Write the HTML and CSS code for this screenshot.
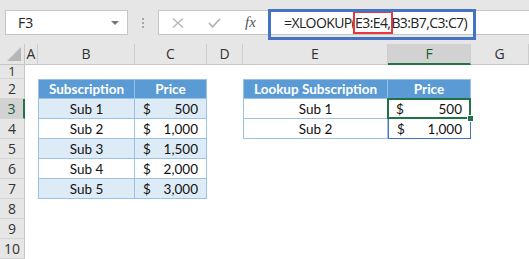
FILE: index.html
```html
<!DOCTYPE html>
<html lang="en">
<head>
    <meta charset="UTF-8">
    <title>XLOOKUP</title>
    <link rel="stylesheet" href="styles.css">
</head>
<body>
    <div class="bar">
        <div class="namebox">
            <span>F3</span>
            <span class="arrow"></span>
        </div>
        <div class="dots"><i></i><i></i><i></i></div>
        <div class="fxbox">
            <svg class="ico" width="12" height="10" viewBox="0 0 12 10"><path d="M1 0.5 L11 9.5 M11 0.5 L1 9.5" stroke="#b4b4b4" stroke-width="1.3" fill="none"/></svg>
            <svg class="ico" width="13" height="10" viewBox="0 0 13 10"><path d="M1 5 L4.5 8.8 L12 1" stroke="#b4b4b4" stroke-width="1.8" fill="none"/></svg>
            <span class="fx">fx</span>
        </div>
        <div class="formula">
            <span class="ftext">=XLOOKUP(<span class="ref">E3:E4,</span>B3:B7,C3:C7)</span>
            <div class="mark"></div>
        </div>
    </div>

    <div class="sheet">
        <!-- column headers -->
        <div class="corner"></div>
        <div class="ch">A</div>
        <div class="ch">B</div>
        <div class="ch">C</div>
        <div class="ch">D</div>
        <div class="ch">E</div>
        <div class="ch on">F</div>
        <div class="ch">G</div>

        <!-- row 1 -->
        <div class="rh short">1</div>
        <div></div><div></div><div></div><div></div><div></div><div></div><div></div>

        <!-- row 2 -->
        <div class="rh">2</div>
        <div></div>
        <div class="t th first top">Subscription</div>
        <div class="t th top">Price</div>
        <div></div>
        <div class="t th first top">Lookup Subscription</div>
        <div class="t th top">Price</div>
        <div></div>

        <!-- row 3 -->
        <div class="rh on">3</div>
        <div></div>
        <div class="t alt first">Sub 1</div>
        <div class="t alt amt"><span>$</span><span>500</span></div>
        <div></div>
        <div class="t first">Sub 1</div>
        <div class="t amt sel"><span>$</span><span>500</span></div>
        <div></div>

        <!-- row 4 -->
        <div class="rh">4</div>
        <div></div>
        <div class="t first">Sub 2</div>
        <div class="t amt"><span>$</span><span>1,000</span></div>
        <div></div>
        <div class="t first">Sub 2</div>
        <div class="t amt spill"><span>$</span><span>1,000</span></div>
        <div></div>

        <!-- row 5 -->
        <div class="rh">5</div>
        <div></div>
        <div class="t alt first">Sub 3</div>
        <div class="t alt amt"><span>$</span><span>1,500</span></div>
        <div></div><div></div><div></div><div></div>

        <!-- row 6 -->
        <div class="rh">6</div>
        <div></div>
        <div class="t first">Sub 4</div>
        <div class="t amt"><span>$</span><span>2,000</span></div>
        <div></div><div></div><div></div><div></div>

        <!-- row 7 -->
        <div class="rh">7</div>
        <div></div>
        <div class="t alt first">Sub 5</div>
        <div class="t alt amt"><span>$</span><span>3,000</span></div>
        <div></div><div></div><div></div><div></div>

        <div class="rh">8</div>
        <div></div><div></div><div></div><div></div><div></div><div></div><div></div>
        <div class="rh">9</div>
        <div></div><div></div><div></div><div></div><div></div><div></div><div></div>
        <div class="rh">10</div>
        <div></div><div></div><div></div><div></div><div></div><div></div><div></div>
    </div>
</body>
</html>
```

FILE: styles.css
```css
body {
    margin: 0;
    width: 529px;
    height: 259px;
    overflow: hidden;
    background-color: #fff;
    font-family: "Open Sans", sans-serif;
}
.bar {
    display: flex;
    align-items: flex-start;
    height: 44px;
    padding-top: 10px;
    box-sizing: border-box;
    background-color: #e6e6e6;
}
.namebox {
    display: flex;
    align-items: center;
    justify-content: space-between;
    box-sizing: border-box;
    width: 123px;
    height: 25px;
    margin-left: 5px;
    padding: 0 8px 0 12px;
    background-color: #fff;
    border: 1px solid #c6c6c6;
    font-size: 14px;
    color: #222;
}
.arrow {
    width: 0;
    height: 0;
    border-left: 4px solid transparent;
    border-right: 4px solid transparent;
    border-top: 4px solid #777;
}
.dots {
    display: flex;
    flex-direction: column;
    align-items: center;
    gap: 2px;
    width: 30px;
    padding-top: 8px;
}
.dots i {
    width: 2px;
    height: 2px;
    background-color: #a6a6a6;
}
.fxbox {
    display: flex;
    align-items: center;
    box-sizing: border-box;
    width: 110px;
    height: 25px;
    padding-left: 13px;
    gap: 24px;
    background-color: #fff;
    border: 1px solid #c6c6c6;
    border-right: none;
}
.fx {
    font-family: "Liberation Serif", serif;
    font-style: italic;
    font-size: 15px;
    color: #555;
}
.formula {
    position: relative;
    flex: 1;
    display: flex;
    align-items: center;
    box-sizing: border-box;
    height: 25px;
    padding-left: 15px;
    background-color: #fff;
    border: 1px solid #c6c6c6;
    border-right: none;
    font-size: 14px;
    letter-spacing: -0.6px;
    color: #222;
}
.ref {
    display: inline-block;
    line-height: 19px;
    padding-right: 1px;
    box-shadow: 0 0 0 2px #e8383d;
}
.mark {
    position: absolute;
    left: -1px;
    top: -2px;
    width: 208px;
    height: 31px;
    box-sizing: border-box;
    border: 3px solid #4472c4;
}
.sheet {
    display: grid;
    grid-template-columns: 25px 13px 97px 72px 36px 145px 83px 58px;
    grid-template-rows: 21px 14px repeat(9, 20px);
}
.corner,
.ch,
.rh {
    background-color: #e6e6e6;
    box-sizing: border-box;
    font-size: 14px;
    line-height: 1;
    color: #333;
}
.corner {
    position: relative;
    border-right: 1px solid #c6c6c6;
    border-bottom: 1px solid #c6c6c6;
}
.corner::after {
    content: "";
    position: absolute;
    right: 3px;
    bottom: 3px;
    border-left: 14px solid transparent;
    border-bottom: 14px solid #b6b6b6;
}
.ch {
    display: flex;
    align-items: center;
    justify-content: center;
    border-right: 1px solid #cdcdcd;
    border-bottom: 1px solid #c6c6c6;
}
.ch.on {
    background-color: #d2d2d2;
    border-bottom: 2px solid #217346;
    color: #185c37;
}
.rh {
    display: flex;
    align-items: center;
    justify-content: center;
    border-right: 1px solid #c6c6c6;
    border-bottom: 1px solid #d4d4d4;
}
.rh.short {
    font-size: 13px;
    line-height: 13px;
}
.rh.on {
    background-color: #d2d2d2;
    border-right: 2px solid #217346;
    color: #185c37;
}
.t {
    display: flex;
    align-items: center;
    justify-content: center;
    box-sizing: border-box;
    font-family: "Lato", sans-serif;
    font-size: 13.5px;
    color: #111;
    border-right: 1px solid #9bc2e6;
    border-bottom: 1px solid #9bc2e6;
}
.t.first {
    border-left: 1px solid #9bc2e6;
}
.t.top {
    border-top: 1px solid #9bc2e6;
}
.th {
    background-color: #5b9bd5;
    color: #fff;
    font-weight: bold;
    font-size: 13.5px;
}
.alt {
    background-color: #ddebf7;
}
.amt {
    justify-content: space-between;
    padding: 0 8px 0 8px;
}
.sel {
    position: relative;
}
.sel::after {
    content: "";
    position: absolute;
    left: -1px;
    top: -1px;
    right: -1px;
    bottom: -1px;
    border: 2px solid #217346;
}
.sel::before {
    content: "";
    position: absolute;
    right: -4px;
    bottom: -4px;
    width: 5px;
    height: 5px;
    background-color: #217346;
    border: 1px solid #fff;
    z-index: 2;
}
.spill {
    border-left: 1px solid #4472c4;
    border-right: 1px solid #4472c4;
    border-bottom: 1px solid #4472c4;
}
```
